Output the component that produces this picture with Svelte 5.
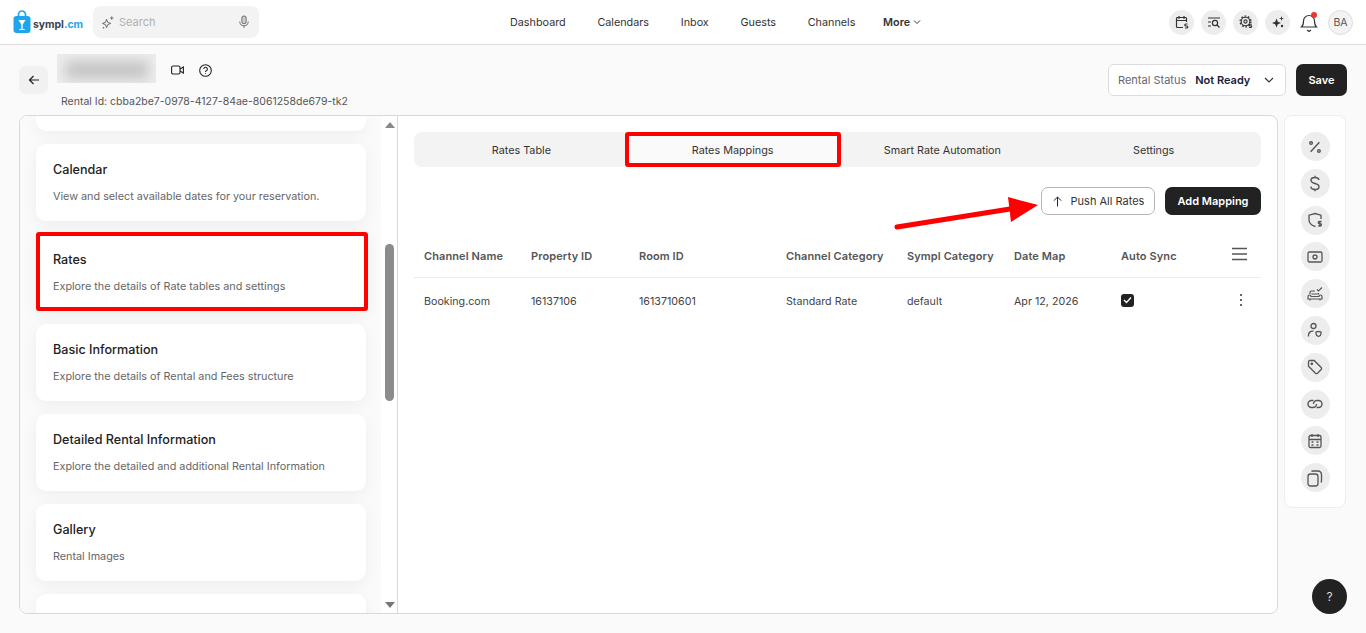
<script>
  const nav = ['Dashboard', 'Calendars', 'Inbox', 'Guests', 'Channels'];
  const cards = [
    ['Calendar', 'View and select available dates for your reservation.', false],
    ['Rates', 'Explore the details of Rate tables and settings', true],
    ['Basic Information', 'Explore the details of Rental and Fees structure', false],
    ['Detailed Rental Information', 'Explore the detailed and additional Rental Information', false],
    ['Gallery', 'Rental Images', false]
  ];
  const tabs = ['Rates Table', 'Rates Mappings', 'Smart Rate Automation', 'Settings'];
  const heads = ['Channel Name', 'Property ID', 'Room ID', 'Channel Category', 'Sympl Category', 'Date Map', 'Auto Sync'];
  const row = ['Booking.com', '16137106', '1613710601', 'Standard Rate', 'default', 'Apr 12, 2026'];
</script>

<div class="page">
  <header class="top">
    <div class="logo">
      <svg width="18" height="24" viewBox="0 0 18 24">
        <path d="M5.500 7V4.500a3.500 3.500 0 0 1 7 0V7" fill="none" stroke="#1ea5ee" stroke-width="1.700"/>
        <rect x="0.500" y="6" width="17" height="17" rx="3" fill="#1ea5ee"/>
        <path d="M5.500 10h7l-2.800 4.400V19h2v1H6.300v-1h2v-4.600z" fill="#fff"/>
      </svg>
      <span class="word">sympl<span class="cm">.cm</span></span>
    </div>
    <div class="search">
      <svg class="i" width="15" height="15" viewBox="0 0 16 16" fill="none" stroke="#666" stroke-width="1">
        <path d="M7 4.500 8.200 7.800 11.500 9 8.200 10.200 7 13.500 5.800 10.200 2.500 9 5.800 7.800z"/><path d="M12.500 1.500v3.500M10.800 3.200h3.500"/><path d="M3 13.500h1.500M3.700 12.800v1.500"/>
      </svg>
      <span class="ph">Search</span>
      <svg class="mic" width="12" height="14" viewBox="0 0 14 16" fill="none" stroke="#777" stroke-width="1.200">
        <rect x="4.500" y="1" width="5" height="9" rx="2.500" fill="#ccc"/><path d="M2 7.500a5 5 0 0 0 10 0M7 12.500V15"/>
      </svg>
    </div>
    <nav class="nav">
      {#each nav as n}<span>{n}</span>{/each}
      <span class="more">More
        <svg width="8" height="6" viewBox="0 0 8 6" fill="none" stroke="#333" stroke-width="1"><path d="M1 1.500 4 4.500 7 1.500"/></svg>
      </span>
    </nav>
    <div class="tools">
      <span class="tool"><svg width="14" height="14" viewBox="0 0 14 14" fill="none" stroke="#333" stroke-width="1.200"><path d="M8 12.500H2.500a1 1 0 0 1-1-1v-8a1 1 0 0 1 1-1h8a1 1 0 0 1 1 1V7M1.500 5.500h10M4 1v3M9 1v3"/><path d="M12.500 9H10.800a.8.800 0 0 0 0 2h1a.8.800 0 0 1 0 2H10"/></svg></span>
      <span class="tool"><svg width="14" height="14" viewBox="0 0 14 14" fill="none" stroke="#333" stroke-width="1.200"><path d="M1 3h12M1 7h3M1 11h3"/><circle cx="8" cy="8" r="2.600"/><path d="m10 10 2.500 2.500"/></svg></span>
      <span class="tool"><svg width="14" height="14" viewBox="0 0 14 14" fill="none" stroke="#333"><circle cx="6.500" cy="6.500" r="4.300" stroke-width="1.100"/><circle cx="6.500" cy="6.500" r="5.400" stroke-width="1.300" stroke-dasharray="1.700 1.700"/><circle cx="6.500" cy="6.500" r="1.600" stroke-width="1.100"/><path d="M12.800 9.200h-1.700a.7.700 0 0 0 0 1.600h.8a.7.700 0 0 1 0 1.600H10" stroke-width="1.100"/></svg></span>
      <span class="tool"><svg width="14" height="14" viewBox="0 0 14 14" fill="#333"><path d="M5.500 3.500 6.800 6.700 10 8 6.800 9.300 5.500 12.500 4.200 9.300 1 8 4.200 6.700z"/><path d="M10.500 1 11.100 2.900 13 3.500 11.100 4.100 10.500 6 9.900 4.100 8 3.500 9.900 2.900z"/><circle cx="11" cy="11" r="1.200"/></svg></span>
      <span class="bell">
        <svg width="18" height="24" viewBox="0 0 18 24" fill="none" stroke="#333" stroke-width="1.200"><path d="M1.500 18c1.500-1.200 2-2.500 2-6a5.500 5.500 0 0 1 11 0c0 3.500.5 4.800 2 6z"/><path d="M7 21 9 22.500l2-1.500"/></svg>
        <i class="dot"></i>
      </span>
      <span class="avatar">BA</span>
    </div>
  </header>

  <section class="sub">
    <button class="back" aria-label="Back">
      <svg width="12" height="12" viewBox="0 0 12 12" fill="none" stroke="#222" stroke-width="1.200"><path d="M11 6H1.500M5.500 2 1.500 6l4 4"/></svg>
    </button>
    <div class="title">
      <div class="titlerow">
        <div class="blur"><i></i></div>
        <svg class="ti" width="13" height="10" viewBox="0 0 13 10" fill="none" stroke="#222" stroke-width="1.100"><rect x=".6" y="1" width="8.400" height="8" rx="1.500"/><path d="m9 4 3.400-2v6L9 6"/></svg>
        <svg class="ti" width="13" height="13" viewBox="0 0 13 13" fill="none" stroke="#222" stroke-width="1.100"><circle cx="6.500" cy="6.500" r="5.800"/><path d="M4.800 5a1.800 1.800 0 1 1 2.500 1.700c-.6.300-.8.600-.8 1.300M6.500 9.300v.8"/></svg>
      </div>
      <div class="rid">Rental Id: cbba2be7-0978-4127-84ae-8061258de679-tk2</div>
    </div>
    <div class="status">
      <span class="sl">Rental Status</span>
      <b>Not Ready</b>
      <svg width="10" height="6" viewBox="0 0 10 6" fill="none" stroke="#333" stroke-width="1.200"><path d="m1 1 4 4 4-4"/></svg>
    </div>
    <button class="save">Save</button>
  </section>

  <main class="main">
    <div class="panel">
      <aside class="left">
        <div class="list">
          <div class="stub"></div>
          {#each cards as c}
            <div class="card" class:hot={c[2]}>
              <h3>{c[0]}</h3>
              <p>{c[1]}</p>
            </div>
          {/each}
          <div class="card"></div>
        </div>
        <div class="sbar">
          <i class="up"></i>
          <i class="thumb"></i>
          <i class="down"></i>
        </div>
      </aside>
      <section class="right">
        <div class="tabs">
          {#each tabs as t, i}
            <div class="tab t{i}" class:on={i === 1}>{t}</div>
          {/each}
        </div>
        <div class="acts">
          <button class="push">
            <svg width="11" height="11" viewBox="0 0 11 11" fill="none" stroke="#222" stroke-width="1"><path d="M5.500 10.500V1M1.800 4.700 5.500 1l3.700 3.700"/></svg>
            Push All Rates
          </button>
          <button class="add">Add Mapping</button>
        </div>
        <div class="tbl thead">
          {#each heads as h}<span>{h}</span>{/each}
          <svg class="burger" width="15" height="14" viewBox="0 0 15 14" stroke="#555" stroke-width="1.400"><path d="M0 1.500h15M0 7h15M0 12.500h15"/></svg>
        </div>
        <div class="tbl trow">
          {#each row as r}<span>{r}</span>{/each}
          <span class="chk"><svg width="9" height="8" viewBox="0 0 9 8" fill="none" stroke="#fff" stroke-width="1.300"><path d="m1 4 2.500 2.500L8 1.500"/></svg></span>
          <svg class="dots" width="4" height="14" viewBox="0 0 4 14" fill="#333"><circle cx="2" cy="2" r="1"/><circle cx="2" cy="7" r="1"/><circle cx="2" cy="12" r="1"/></svg>
        </div>
      </section>
    </div>
    <aside class="rail">
      <span class="rc"><svg width="14" height="14" viewBox="0 0 16 16" fill="none" stroke="#555" stroke-width="1.600"><path d="M13 2.500 3 13.500"/><circle cx="3.500" cy="3.500" r="1.500"/><circle cx="12.500" cy="12.500" r="1.500"/></svg></span>
      <span class="rc"><svg width="12" height="17" viewBox="0 0 12 17" fill="none" stroke="#555" stroke-width="1.400"><path d="M10 5c-.3-1.700-1.800-2.500-4-2.500S2 3.500 2 5.200 3.500 7.800 6 8.500s4 1.400 4 3.200S8.300 14.500 6 14.500s-4-1-4.200-2.800M6 .8v2M6 14.300v2"/></svg></span>
      <span class="rc"><svg width="16" height="16" viewBox="0 0 16 16" fill="none" stroke="#555" stroke-width="1.300"><path d="M8.500 14.500C4 13.500 2 11 2 7.500V3.200l6-1.700 6 1.700V7"/><path d="M14.500 9.500h-2.200a1 1 0 0 0 0 2.200h1a1 1 0 0 1 0 2.200H11M12.800 8.800v6"/></svg></span>
      <span class="rc"><svg width="16" height="14" viewBox="0 0 16 14" fill="none" stroke="#555" stroke-width="1.300"><rect x="1" y="2" width="14" height="10" rx="1.500"/><circle cx="8" cy="7" r="2"/><path d="M3.500 7h.1M12.400 7h.1"/></svg></span>
      <span class="rc"><svg width="16" height="16" viewBox="0 0 16 16" fill="none" stroke="#555" stroke-width="1.200"><path d="M3 8V6.500A1.500 1.500 0 0 1 4.500 5H8M1 10.500a1.500 1.500 0 0 1 3 0h8a1.500 1.500 0 0 1 3 0V13H1zM3 13v1.500M13 13v1.500M4.500 8h7V7"/><path d="m10 3.500 1.500 1.500L15 1.500"/></svg></span>
      <span class="rc"><svg width="16" height="16" viewBox="0 0 16 16" fill="none" stroke="#555" stroke-width="1.300"><circle cx="6.500" cy="4" r="2.500"/><path d="M1.500 14.500v-1.500a4 4 0 0 1 5-3.800"/><path d="M11.500 14.500c-1.700-.6-2.500-1.500-2.500-3V10l2.500-.7L14 10v1.500c0 1.500-.8 2.400-2.500 3z"/></svg></span>
      <span class="rc"><svg width="16" height="16" viewBox="0 0 16 16" fill="none" stroke="#555" stroke-width="1.300"><path d="M1.500 2.800a1.300 1.300 0 0 1 1.300-1.300h4.400l7 7a1.500 1.500 0 0 1 0 2L10.500 14.200a1.500 1.500 0 0 1-2 0l-7-7z"/><circle cx="4.800" cy="4.800" r=".7" fill="#555"/></svg></span>
      <span class="rc"><svg width="16" height="12" viewBox="0 0 16 12" fill="none" stroke="#555" stroke-width="1.400"><path d="M6.500 2.500H4.500a3.500 3.500 0 0 0 0 7H6a3.500 3.500 0 0 0 3.500-3.500"/><path d="M9.500 9.500h2a3.500 3.500 0 0 0 0-7H10A3.500 3.500 0 0 0 6.500 6"/></svg></span>
      <span class="rc"><svg width="14" height="16" viewBox="0 0 14 16" fill="none" stroke="#555" stroke-width="1.300"><rect x="1" y="2.500" width="12" height="12" rx="1.500"/><path d="M1 6.500h12M4 1v3M10 1v3"/><path d="M3.500 9h2M8.500 9h2M3.500 12h2M8.500 12h2" stroke-width="1.500"/></svg></span>
      <span class="rc"><svg width="16" height="18" viewBox="0 0 16 18" fill="none" stroke="#555" stroke-width="1.300"><rect x="1" y="5" width="10" height="12" rx="2.500"/><path d="M4.500 2.500a1.500 1.500 0 0 1 1-.5h5.500a3.500 3.500 0 0 1 3.500 3.500V12a2 2 0 0 1-.7 1.500"/></svg></span>
    </aside>
  </main>

  <svg class="arrow" width="150" height="36" viewBox="0 0 150 36" aria-hidden="true">
    <path d="M5 32 118 14" stroke="#f00" stroke-width="5" stroke-linecap="round"/>
    <path d="M116 2 146 10 119 27z" fill="#f00"/>
  </svg>
  <button class="help">?</button>
</div>

<style>
  :global(body) { margin: 0; background: #fafafa; }
  .page {
    width: 1366px; height: 633px; overflow: hidden; position: relative;
    background: #fafafa; color: #222; box-sizing: border-box;
    font-family: Inter, "Liberation Sans", sans-serif; font-size: 10.8px;
  }
  button { font-family: inherit; cursor: pointer; }
  .top {
    height: 44px; background: #fff; border-bottom: 1px solid #dcdcdc;
    display: flex; align-items: center; padding-left: 13px; box-sizing: content-box;
  }
  .logo { display: flex; align-items: center; gap: 2px; width: 80px; }
  .word { font-weight: 700; font-size: 10.4px; color: #3a4450; margin-top: 4px; }
  .cm { color: #1ea5ee; }
  .search {
    width: 166px; height: 32px; border-radius: 8px; background: #f3f3f3;
    display: flex; align-items: center; padding: 0 9px 0 7px; box-sizing: border-box; gap: 4px;
  }
  .ph { color: #b0b0b0; font-size: 11px; flex: 1; }
  .nav {
    margin-left: 251px; display: flex; gap: 31.7px; font-size: 10.8px; color: #333; align-items: center;
  }
  .more { font-weight: 600; display: flex; gap: 3px; align-items: center; margin-left: -4px; }
  .tools { margin-left: auto; display: flex; align-items: center; gap: 7px; padding-right: 13px; }
  .tool {
    width: 25px; height: 25px; border-radius: 50%; background: #ededed;
    display: grid; place-items: center;
  }
  .bell { position: relative; width: 18px; height: 24px; display: block; margin: -3px 3px 0; }
  .dot { position: absolute; top: 3px; right: 1px; width: 6px; height: 6px; border-radius: 50%; background: #ee3333; }
  .avatar {
    width: 25px; height: 25px; border-radius: 50%; background: #f3f3f3; border: 1px solid #ddd;
    display: grid; place-items: center; font-size: 10.5px; color: #555; box-sizing: border-box;
  }
  .sub {
    height: 70px; display: flex; align-items: flex-start; padding: 0 19px; box-sizing: border-box;
  }
  .back {
    width: 29px; height: 28px; border: 0; border-radius: 7px; background: #f1f1f1; margin-top: 21px;
    display: grid; place-items: center; padding: 0;
  }
  .title { margin-left: 9px; padding-top: 9px; }
  .titlerow { display: flex; align-items: center; gap: 15px; height: 29px; }
  .ti { margin-top: 3px; }
  .blur { width: 99px; height: 29px; background: #ececec; overflow: hidden; }
  .blur i { display: block; width: 82px; height: 18px; margin: 7px 9px; background: #c6c6c6; filter: blur(6px); }
  .rid { margin: 12px 0 0 4px; color: #555; font-size: 10.5px; white-space: nowrap; line-height: 13px; }
  .status {
    margin-left: auto; margin-top: 19px; width: 178px; height: 32px; box-sizing: border-box;
    background: #fff; border: 1px solid #dcdcdc; border-radius: 6px;
    display: flex; align-items: center; padding: 0 11px 0 9px; font-size: 11px;
  }
  .sl { color: #667; }
  .status b { margin-left: 9px; font-weight: 600; color: #1a2233; flex: 1; }
  .save {
    margin-left: 10px; margin-top: 19px; width: 51px; height: 32px; border: 0; border-radius: 7px;
    background: #222; color: #fff; font-weight: 600; font-size: 11px;
  }
  .main { display: flex; align-items: flex-start; padding-left: 19px; gap: 6px; }
  .panel {
    width: 1259px; height: 499px; box-sizing: border-box; background: #fff;
    border: 1px solid #d9d9d9; border-radius: 8px; display: flex; overflow: hidden;
  }
  .left {
    width: 378px; flex: none; display: flex; background: #fafafa;
    border-right: 1px solid #d9d9d9; box-sizing: border-box;
  }
  .list {
    width: 361px; flex: none; padding-left: 16px; box-sizing: border-box; overflow: hidden;
    display: flex; flex-direction: column; gap: 13px;
  }
  .stub {
    flex: none; width: 330px; height: 15px; background: #fff; border-radius: 0 0 10px 10px;
    box-shadow: 0 4px 16px rgba(0,0,0,.05);
  }
  .card {
    flex: none; width: 330px; height: 77px; background: #fff; border-radius: 10px;
    padding: 17px 17px 0; box-sizing: border-box;
    box-shadow: 0 4px 16px rgba(0,0,0,.05);
  }
  .card.hot {
    width: 332px; height: 79px; margin: -2px 0 0; border: 4px solid #f00; border-radius: 3px;
    padding: 15px 13px 0;
  }
  .card h3 { margin: 0; font-size: 12.6px; font-weight: 500; color: #222; line-height: 18px; }
  .card p { margin: 10px 0 0; font-size: 10.8px; color: #666; line-height: 15px; white-space: nowrap; }
  .sbar { flex: 1; position: relative; background: #fff; }
  .sbar i { position: absolute; left: 4px; }
  .up { top: 6px; border: 5px solid transparent; border-top: 0; border-bottom: 6px solid #888; width: 0; height: 0; }
  .thumb { top: 128px; width: 9px; height: 157px; background: #8c8c8c; border-radius: 5px; }
  .down { top: 486px; border: 5px solid transparent; border-bottom: 0; border-top: 6px solid #777; width: 0; height: 0; }
  .right { flex: 1; padding: 16px 16px 0; min-width: 0; }
  .tabs {
    height: 35px; background: #f3f3f3; border-radius: 8px;
    display: grid; grid-template-columns: repeat(4, 1fr);
  }
  .tab { display: grid; place-items: center; font-size: 10.8px; color: #333; border-radius: 8px; padding-top: 1px; box-sizing: border-box; }
  .t0 { padding-left: 3px; }
  .t2 { padding-right: 2px; }
  .t3 { padding-right: 3px; }
  .tab.on {
    background: #fafafa; border: 4px solid #f00; border-radius: 3px;
    margin-right: -3px; margin-left: -1px;
  }
  .acts { display: flex; justify-content: flex-end; gap: 10px; margin-top: 20px; }
  .acts button { height: 28px; border-radius: 7px; font-size: 11px; padding: 0; }
  .push {
    width: 114px; background: #fff; border: 1px solid #b5b5b5; color: #333;
    display: flex; align-items: center; justify-content: center; gap: 8px;
  }
  .add { width: 96px; background: #222; border: 0; color: #fff; font-weight: 600; }
  .tbl {
    display: grid; grid-template-columns: 107px 108px 147px 121px 107px 107px 111px 1fr;
    padding-left: 10px; align-items: center; font-size: 10.7px; white-space: nowrap;
  }
  .thead {
    height: 43px; padding-top: 6px; margin-top: 13px; border-bottom: 1px solid #ececec; color: #555;
    font-weight: 600; font-size: 11px; letter-spacing: .1px;
  }
  .burger { justify-self: start; margin-bottom: 4px; }
  .trow { height: 46px; color: #444; }
  .chk {
    width: 13px; height: 13px; border-radius: 3px; background: #222; display: grid; place-items: center;
    margin-bottom: 2px;
  }
  .dots { justify-self: start; margin: 0 0 2px 7px; }
  .rail {
    width: 62px; height: 393px; box-sizing: border-box; background: #fff; border: 1px solid #eee; border-radius: 8px;
    display: flex; flex-direction: column; align-items: center; padding-top: 16px; gap: 7.8px;
  }
  .rc {
    width: 29px; height: 29px; flex: none; border-radius: 50%; background: #ededed;
    display: grid; place-items: center;
  }
  .arrow { position: absolute; left: 892px; top: 195px; }
  .help {
    position: absolute; left: 1312px; top: 579px; width: 35px; height: 35px; border: 0; border-radius: 50%;
    background: #222; color: #ddd; font-size: 12px; padding: 0;
  }
</style>
